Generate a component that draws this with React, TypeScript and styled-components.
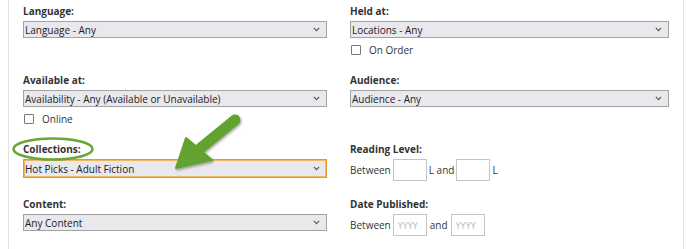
import React, { FC } from 'react'
import styled, { createGlobalStyle } from 'styled-components'

const GlobalStyle = createGlobalStyle`
    body {
        margin: 0;
        background: #ffffff;
        font-family: "Open Sans", "Noto Sans", sans-serif;
        color: #333333;
    }
`

const Page = styled.div`
    position: relative;
    width: 691px;
    height: 249px;
    overflow: hidden;
    background: #ffffff;
`

const Panel = styled.div`
    margin-left: 8px;
    width: 676px;
    height: 249px;
    border-left: 1px solid #e2e2e2;
    border-right: 1px solid #e2e2e2;
    box-sizing: border-box;
    padding: 5px 0 0 14px;
`

const Grid = styled.div`
    display: grid;
    grid-template-columns: 304px 319px;
    column-gap: 23px;
    row-gap: 17px;
`

const Field = styled.div`
    display: flex;
    flex-direction: column;
`

const Label = styled.div`
    font-size: 10px;
    font-weight: 700;
    line-height: 12px;
    color: #333333;
    margin-bottom: 4px;
`

const Select = styled.div<{ $focused?: boolean }>`
    display: flex;
    align-items: center;
    justify-content: space-between;
    height: ${p => (p.$focused ? '19px' : '17px')};
    box-sizing: border-box;
    padding: 0 6px 0 1px;
    background: #e9e8ed;
    border: 1px solid ${p => (p.$focused ? '#e39a2d' : '#a3a3a3')};
    box-shadow: ${p => (p.$focused ? 'inset 0 0 0 1px #f1b860' : 'none')};
    font-size: 10px;
    color: #222222;
`

const CheckRow = styled.label`
    display: flex;
    align-items: center;
    gap: 8px;
    height: 14px;
    margin-top: 5px;
    padding-left: 1px;
    font-size: 10px;
    color: #333333;
`

const Box = styled.span`
    width: 8px;
    height: 8px;
    border: 1px solid #777777;
    border-radius: 1px;
    background: #ffffff;
`

const RangeRow = styled.div`
    display: flex;
    align-items: center;
    gap: 2px;
    font-size: 10px;
    color: #333333;
`

const TextBox = styled.input`
    width: 34px;
    height: 22px;
    box-sizing: border-box;
    border: 1px solid #c4c4c4;
    padding: 0 4px;
    margin: 0;
    font-family: inherit;
    font-size: 9px;
    color: #333333;
    background: #ffffff;
    &::placeholder {
        color: #b8b8b8;
    }
`

const Spaced = styled.span`
    padding: 0 1px;
`

const Overlay = styled.svg`
    position: absolute;
    left: 0;
    top: 0;
    pointer-events: none;
`

const Chevron: FC = () => (
    <svg width="7" height="5" viewBox="0 0 7 5">
        <path d="M0.8 0.8 L3.5 3.6 L6.2 0.8" fill="none" stroke="#555" strokeWidth="1.1" />
    </svg>
)

const Dropdown: FC<{ value: string; focused?: boolean }> = ({ value, focused }) => (
    <Select $focused={focused}>
        <span>{value}</span>
        <Chevron />
    </Select>
)

const Check: FC<{ text: string }> = ({ text }) => (
    <CheckRow>
        <Box />
        {text}
    </CheckRow>
)

const App: FC = () => {
    return (
        <Page>
            <GlobalStyle />
            <Panel>
                <Grid>
                    <Field>
                        <Label>Language:</Label>
                        <Dropdown value="Language - Any" />
                    </Field>
                    <Field>
                        <Label>Held at:</Label>
                        <Dropdown value="Locations - Any" />
                        <Check text="On Order" />
                    </Field>
                    <Field>
                        <Label>Available at:</Label>
                        <Dropdown value="Availability - Any (Available or Unavailable)" />
                        <Check text="Online" />
                    </Field>
                    <Field>
                        <Label>Audience:</Label>
                        <Dropdown value="Audience - Any" />
                    </Field>
                    <Field>
                        <Label>Collections:</Label>
                        <Dropdown value="Hot Picks - Adult Fiction" focused />
                    </Field>
                    <Field>
                        <Label>Reading Level:</Label>
                        <RangeRow>
                            Between <TextBox /> L and <TextBox /> L
                        </RangeRow>
                    </Field>
                    <Field>
                        <Label>Content:</Label>
                        <Dropdown value="Any Content" />
                    </Field>
                    <Field>
                        <Label>Date Published:</Label>
                        <RangeRow>
                            Between
                            <TextBox placeholder="YYYY" />
                            <Spaced>and</Spaced>
                            <TextBox placeholder="YYYY" />
                        </RangeRow>
                    </Field>
                </Grid>
            </Panel>
            <Overlay width="691" height="249" viewBox="0 0 691 249">
                <defs>
                    <filter id="sh" x="-20%" y="-20%" width="140%" height="140%">
                        <feDropShadow dx="1" dy="1.5" stdDeviation="1.2" floodColor="#000" floodOpacity="0.35" />
                    </filter>
                </defs>
                <ellipse cx="53" cy="149" rx="39.5" ry="10.5" fill="none" stroke="#6aa536" strokeWidth="2.6" />
                <g filter="url(#sh)">
                    <line x1="235" y1="120" x2="197" y2="151" stroke="#62a22f" strokeWidth="11" strokeLinecap="round" />
                    <polygon points="186,138 212,160 176,168" fill="#62a22f" stroke="#62a22f" strokeWidth="2" strokeLinejoin="round" />
                </g>
            </Overlay>
        </Page>
    )
}

export default App
